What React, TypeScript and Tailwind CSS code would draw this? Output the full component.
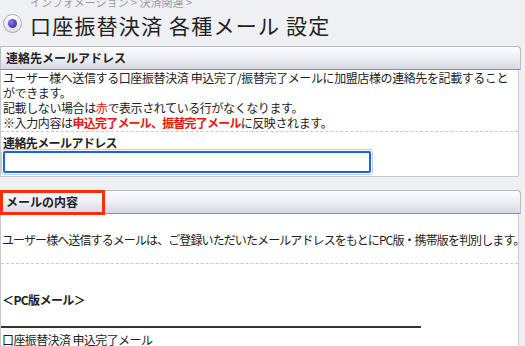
import React from 'react';

// Section header bar with the grey gradient
function SectionHeader({ title, marked }: { title: string; marked?: boolean }) {
  return (
    <div className="relative h-[24px] w-[521px] rounded-tr-[4px] border border-[#b9bcc4] border-b-[#8d9098] bg-gradient-to-b from-[#fbfcfe] via-[#eef0f5] to-[#d5d8e0] pl-[5px] text-[12px] leading-[22px] font-bold text-[#222]">
      {title}
      {marked && (
        <div className="absolute left-[-1px] top-[-1px] h-[25px] w-[105px] border-[3px] border-[#ff2b0e]" />
      )}
    </div>
  );
}

function Dashed() {
  return <div className="w-full border-t border-dashed border-[#c9c9c9]" />;
}

export default function App() {
  return (
    <div
      className="h-[346px] w-[525px] overflow-hidden bg-[#eff0f4] text-[#222]"
      style={{ fontFamily: '"Noto Sans CJK JP", "Liberation Sans", sans-serif' }}
    >
      {/* breadcrumb + title */}
      <div className="relative h-[46px]">
        <div className="absolute left-[30px] top-[-4px] text-[11px] leading-[12px] text-[#9a9aa0]">
          インフォメーション &gt; 決済関連 &gt;
        </div>
        <div className="flex items-center gap-[8px] pl-[3px] pt-[10px]">
          <div className="flex h-[19px] w-[19px] items-center justify-center rounded-full border border-[#a8abb4] bg-gradient-to-b from-[#ffffff] to-[#dcdee6]">
            <div className="h-[9px] w-[9px] rounded-full bg-[radial-gradient(circle_at_35%_35%,#8a7cf0,#2a1490)]" />
          </div>
          <div className="mt-[3px] text-[21px] leading-[24px] tracking-[1.2px] text-[#222]">
            口座振替決済 各種メール 設定
          </div>
        </div>
      </div>

      {/* section 1 */}
      <SectionHeader title="連絡先メールアドレス" />
      <div className="w-[519px] border-x border-b border-[#c8c9cd] bg-white pb-[2px]">
        <div className="px-[2px] pb-[1px] text-[12px] leading-[15px] tracking-[-0.4px]">
          ユーザー様へ送信する口座振替決済 申込完了/振替完了メールに加盟店様の連絡先を記載すること
          <br />
          ができます。
          <br />
          記載しない場合は<span className="text-[#e8160c]">赤</span>で表示されている行がなくなります。
          <br />
          ※入力内容は<span className="font-bold tracking-[-0.8px] text-[#e8160c]">申込完了メール、振替完了メール</span>に反映されます。
        </div>
        <Dashed />
        <div className="px-[2px] pt-[3px] text-[12px] leading-[15px] font-bold tracking-[-0.6px]">
          連絡先メールアドレス
        </div>
        <div className="ml-[1px] w-[370px] rounded-[3px] p-[1px] ring-1 ring-[#b8cdf0]">
          <input
            autoFocus
            className="block h-[22px] w-full rounded-[2px] border-2 border-[#1565e0] bg-white px-[4px] text-[12px] outline-none"
          />
        </div>
      </div>

      {/* section 2 */}
      <div className="mt-[13px]">
        <SectionHeader title="メールの内容" marked />
        <div className="w-[519px] border-x border-[#c8c9cd] bg-white">
          <div className="whitespace-nowrap px-[1px] pt-[18px] pb-[15px] text-[12px] leading-[16px] tracking-[-0.9px]">
            ユーザー様へ送信するメールは、ご登録いただいたメールアドレスをもとにPC版・携帯版を判別します。
          </div>
          <Dashed />
          <div className="px-[1px] pt-[28px] text-[12px] leading-[16px] font-bold tracking-[-0.6px]">
            ＜PC版メール＞
          </div>
          <div className="mt-[18px] h-[2px] w-[420px] bg-[#333]" />
          <div className="px-[1px] pt-[4px] text-[12px] leading-[16px] tracking-[-0.6px]">
            口座振替決済 申込完了メール
          </div>
        </div>
      </div>
    </div>
  );
}
